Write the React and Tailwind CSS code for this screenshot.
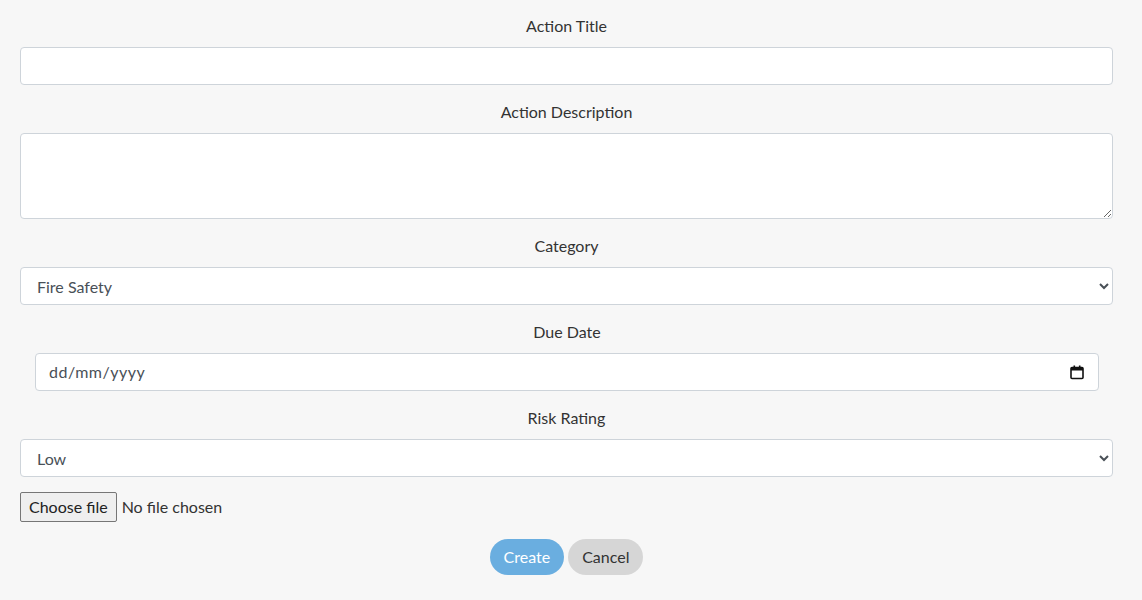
import React from "react";

const field =
  "block w-full h-[38px] rounded-[4px] border border-[#ced4da] bg-white px-3 text-base text-[#495057] outline-none";

function Label({ children }) {
  return <label className="block text-center text-base leading-6 text-[#333] mb-2 -mt-px pb-px">{children}</label>;
}

function CalendarIcon() {
  return (
    <svg width="14" height="15" viewBox="0 0 14 15" aria-hidden="true">
      <rect x="1" y="2.5" width="12" height="11" rx="1" fill="none" stroke="#111" strokeWidth="1.6" />
      <rect x="1" y="2.5" width="12" height="3" fill="#111" />
      <rect x="3.5" y="0.5" width="1.6" height="3" fill="#111" />
      <rect x="8.9" y="0.5" width="1.6" height="3" fill="#111" />
    </svg>
  );
}

export default function App() {
  return (
    <div
      className="min-h-[600px] bg-[#f7f7f7] pl-5 pr-[29px] pt-[15px]"
      style={{ fontFamily: "Lato, 'Noto Sans', sans-serif" }}
    >
      <div className="mb-4">
        <Label>Action Title</Label>
        <input type="text" className={field} />
      </div>

      <div className="mb-4">
        <Label>Action Description</Label>
        <textarea className="block w-full h-[86px] rounded-[4px] border border-[#ced4da] bg-white px-3 py-1.5 text-base text-[#495057] outline-none" />
      </div>

      <div className="mb-4">
        <Label>Category</Label>
        <select className={field} defaultValue="Fire Safety">
          <option>Fire Safety</option>
          <option>Electrical</option>
          <option>Housekeeping</option>
        </select>
      </div>

      <div className="mb-4 pl-[15px] pr-[14px]">
        <Label>Due Date</Label>
        <div className="flex h-[38px] items-center justify-between rounded-[4px] border border-[#ced4da] bg-white pl-[13px] pr-[14px] text-base text-[#495057]">
          <span className="tracking-[0.5px]">dd/mm/yyyy</span>
          <CalendarIcon />
        </div>
      </div>

      <div className="mb-[15px]">
        <Label>Risk Rating</Label>
        <select className={field} defaultValue="Low">
          <option>Low</option>
          <option>Medium</option>
          <option>High</option>
        </select>
      </div>

      <div className="flex items-center gap-[5px] text-base text-[#333]">
        <button className="h-[30px] rounded-[2px] border border-[#767676] bg-[#efefef] px-[8px] text-base text-[#222]">
          Choose file
        </button>
        <span>No file chosen</span>
      </div>

      <div className="mt-[17px] flex justify-center gap-1">
        <button className="h-9 rounded-full bg-[#6aaee0] px-[14px] text-base text-white">Create</button>
        <button className="h-9 rounded-full bg-[#d6d6d6] px-[14px] text-base text-[#333]">Cancel</button>
      </div>
    </div>
  );
}
